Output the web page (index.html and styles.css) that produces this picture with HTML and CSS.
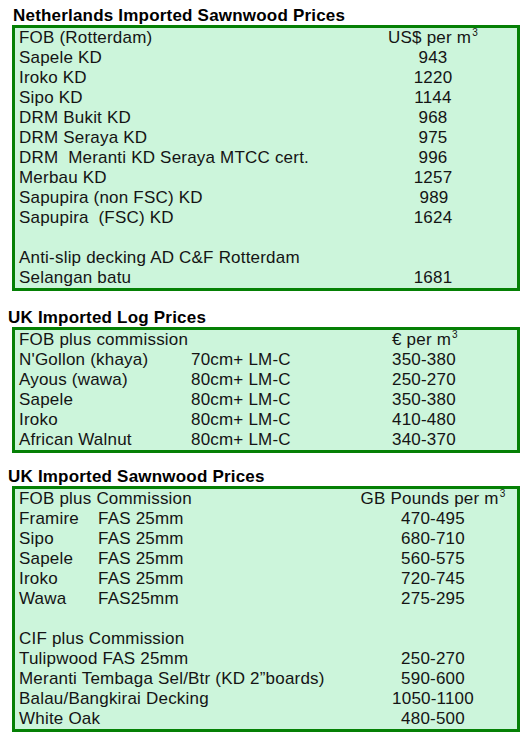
FILE: index.html
```html
<!DOCTYPE html>
<html>
<head>
<meta charset="utf-8">
<link rel="stylesheet" href="styles.css">
</head>
<body>
<h2 class="title title-first">Netherlands Imported Sawnwood Prices</h2>
<div class="box">
  <div class="row r1"><span>FOB (Rotterdam)</span><span class="val">US$ per m<sup>3</sup></span></div>
  <div class="row r1"><span>Sapele KD</span><span class="val">943</span></div>
  <div class="row r1"><span>Iroko KD</span><span class="val">1220</span></div>
  <div class="row r1"><span>Sipo KD</span><span class="val">1144</span></div>
  <div class="row r1"><span>DRM Bukit KD</span><span class="val">968</span></div>
  <div class="row r1"><span>DRM Seraya KD</span><span class="val">975</span></div>
  <div class="row r1"><span class="pre">DRM  Meranti KD Seraya MTCC cert.</span><span class="val">996</span></div>
  <div class="row r1"><span>Merbau KD</span><span class="val">1257</span></div>
  <div class="row r1"><span>Sapupira (non FSC) KD</span><span class="val nudge">989</span></div>
  <div class="row r1"><span class="pre">Sapupira  (FSC) KD</span><span class="val">1624</span></div>
  <div class="row r1 blank"></div>
  <div class="row r1"><span>Anti-slip decking AD C&amp;F Rotterdam</span></div>
  <div class="row r1"><span>Selangan batu</span><span class="val">1681</span></div>
</div>

<h2 class="title">UK Imported Log Prices</h2>
<div class="box">
  <div class="row r2"><span class="wide">FOB plus commission</span><span>€ per m<sup>3</sup></span></div>
  <div class="row r2"><span>N'Gollon (khaya)</span><span>70cm+ LM-C</span><span>350-380</span></div>
  <div class="row r2"><span>Ayous (wawa)</span><span>80cm+ LM-C</span><span>250-270</span></div>
  <div class="row r2"><span>Sapele</span><span>80cm+ LM-C</span><span>350-380</span></div>
  <div class="row r2"><span>Iroko</span><span>80cm+ LM-C</span><span>410-480</span></div>
  <div class="row r2"><span>African Walnut</span><span>80cm+ LM-C</span><span>340-370</span></div>
</div>

<h2 class="title">UK Imported Sawnwood Prices</h2>
<div class="box">
  <div class="row r3"><span class="wide">FOB plus Commission</span><span class="val">GB Pounds per m<sup>3</sup></span></div>
  <div class="row r3"><span>Framire</span><span>FAS 25mm</span><span class="val">470-495</span></div>
  <div class="row r3"><span>Sipo</span><span>FAS 25mm</span><span class="val">680-710</span></div>
  <div class="row r3"><span>Sapele</span><span>FAS 25mm</span><span class="val">560-575</span></div>
  <div class="row r3"><span>Iroko</span><span>FAS 25mm</span><span class="val">720-745</span></div>
  <div class="row r3"><span>Wawa</span><span>FAS25mm</span><span class="val">275-295</span></div>
  <div class="row r3 blank"></div>
  <div class="row r3"><span class="wide">CIF plus Commission</span></div>
  <div class="row r3"><span class="wide">Tulipwood FAS 25mm</span><span class="val">250-270</span></div>
  <div class="row r3"><span class="wide">Meranti Tembaga Sel/Btr (KD 2”boards)</span><span class="val">590-600</span></div>
  <div class="row r3"><span class="wide">Balau/Bangkirai Decking</span><span class="val">1050-1100</span></div>
  <div class="row r3"><span class="wide">White Oak</span><span class="val">480-500</span></div>
</div>
</body>
</html>
```
FILE: styles.css
```css
html, body {
  margin: 0;
  padding: 0;
  background: #ffffff;
}

body {
  font-family: "Liberation Sans", Arial, sans-serif;
  font-size: 17px;
  letter-spacing: 0.2px;
  color: #141414;
  width: 530px;
}

.title {
  margin: 14px 0 0 8px;
  font-size: 17px;
  font-weight: bold;
  line-height: 19px;
  height: 19px;
  color: #000;
}

.title-first {
  margin-top: 6px;
  margin-left: 13px;
}

.box + .title {
  margin-top: 17px;
}

.box + .title + .box + .title {
  margin-top: 14px;
}

.box {
  margin-left: 12px;
  width: 508px;
  box-sizing: border-box;
  border: 3px solid #058005;
  background: #ccf5db;
}

.row {
  display: grid;
  height: 20px;
  line-height: 20px;
  white-space: nowrap;
  padding-left: 4px;
}

.r1 {
  grid-template-columns: 1fr 166px;
  padding-right: 1px;
}

.r2 {
  grid-template-columns: 172px 201px 1fr;
}

.r3 {
  grid-template-columns: 79px 1fr 166px;
  padding-right: 1px;
}

.r2 .wide {
  grid-column: 1 / span 2;
}

.r3 .wide {
  grid-column: 1 / span 2;
}

.r3 .val {
  grid-column: 3;
}

.val {
  text-align: center;
}

.nudge {
  padding-left: 2px;
}

.pre {
  white-space: pre;
}

sup {
  font-size: 10px;
  line-height: 0;
  vertical-align: 7px;
  margin-left: 1px;
}
```
